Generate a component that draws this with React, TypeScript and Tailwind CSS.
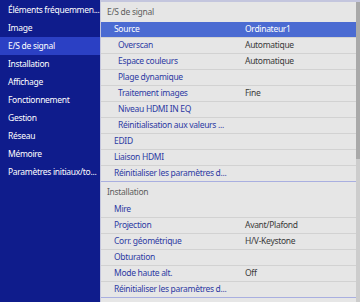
const menu = [
  'Éléments fréquemmen...',
  'Image',
  'E/S de signal',
  'Installation',
  'Affichage',
  'Fonctionnement',
  'Gestion',
  'Réseau',
  'Mémoire',
  'Paramètres initiaux/to...',
]

type Row = { label: string; value?: string; sub?: boolean; active?: boolean; last?: boolean }

const signal: Row[] = [
  { label: 'Source', value: 'Ordinateur1', active: true },
  { label: 'Overscan', value: 'Automatique', sub: true },
  { label: 'Espace couleurs', value: 'Automatique', sub: true },
  { label: 'Plage dynamique', sub: true },
  { label: 'Traitement images', value: 'Fine', sub: true },
  { label: 'Niveau HDMI IN EQ', sub: true },
  { label: 'Réinitialisation aux valeurs ...', sub: true },
  { label: 'EDID' },
  { label: 'Liaison HDMI' },
  { label: 'Réinitialiser les paramètres d...', last: true },
]

const install: Row[] = [
  { label: 'Mire' },
  { label: 'Projection', value: 'Avant/Plafond' },
  { label: 'Corr. géométrique', value: 'H/V-Keystone' },
  { label: 'Obturation' },
  { label: 'Mode haute alt.', value: 'Off' },
  { label: 'Réinitialiser les paramètres d...', last: true },
]

function MenuRow({ row }: { row: Row }) {
  return (
    <div
      className={`flex h-4 items-center border-b ${
        row.last ? 'border-[#a9afe0]' : 'border-[#d2d2d2]'
      } ${row.active ? 'bg-[#4b6bd2] text-white' : 'text-[#2d3aa3]'}`}
    >
      <span className={`w-[144px] whitespace-nowrap ${row.sub ? 'pl-[17px]' : 'pl-[13px]'}`}>{row.label}</span>
      {row.value && <span className={row.active ? 'text-white' : 'text-[#3a3a3a]'}>{row.value}</span>}
    </div>
  )
}

function Section({ title, rows }: { title: string; rows: Row[] }) {
  return (
    <div>
      <div className="flex h-5 items-center pl-[6px] text-[#5e5e5e]">{title}</div>
      {rows.map(r => (
        <MenuRow key={r.label} row={r} />
      ))}
    </div>
  )
}

export default function App() {
  return (
    <div
      className="flex h-[302px] w-[360px] overflow-hidden bg-[#e6e6e6] text-[8.5px] leading-none tracking-[-0.3px]"
      style={{ fontFamily: '"Noto Sans", "Open Sans", sans-serif' }}
    >
      <div className="flex w-[100px] shrink-0 flex-col overflow-hidden bg-[#0f1c8c] pt-px text-white">
        {menu.map(m => (
          <div
            key={m}
            className={`flex h-[18px] items-center whitespace-nowrap pl-[8px] ${m === 'E/S de signal' ? 'bg-[#2b40c4]' : ''}`}
          >
            {m}
          </div>
        ))}
      </div>
      <div className="flex flex-1 border-l border-t-2 border-[#c4c6de]">
        <div className="flex-1">
          <Section title="E/S de signal" rows={signal} />
          <Section title="Installation" rows={install} />
        </div>
        <div className="w-[4px] bg-[#cdcdcd]">
          <div className="h-[157px] bg-[#a9a9a9]" />
        </div>
      </div>
    </div>
  )
}
